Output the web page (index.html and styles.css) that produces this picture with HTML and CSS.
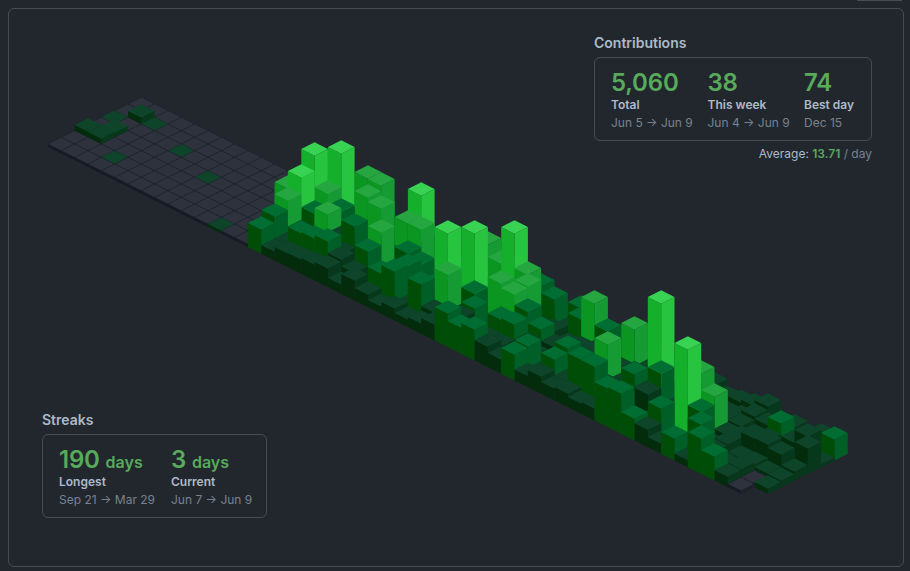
FILE: index.html
```html
<!DOCTYPE html>
<html>
  <head>
    <title>Isometric contributions</title>
    <link rel="stylesheet" href="styles.css">
  </head>
  <body>
    <div class="graph-box">
      <svg id="chart" class="chart" width="910" height="571"></svg>

      <div class="panel panel-top">
        <h5 class="panel-title">Contributions</h5>
        <div class="stat-card">
          <div class="stat">
            <span class="stat-num">5,060</span>
            <span class="stat-label">Total</span>
            <span class="stat-date">Jun 5 → Jun 9</span>
          </div>
          <div class="stat">
            <span class="stat-num">38</span>
            <span class="stat-label">This week</span>
            <span class="stat-date">Jun 4 → Jun 9</span>
          </div>
          <div class="stat">
            <span class="stat-num">74</span>
            <span class="stat-label">Best day</span>
            <span class="stat-date">Dec 15</span>
          </div>
        </div>
        <p class="average">Average: <b>13.71</b> <span>/ day</span></p>
      </div>

      <div class="panel panel-bottom">
        <h5 class="panel-title">Streaks</h5>
        <div class="stat-card">
          <div class="stat streak-long">
            <span class="stat-num">190 <small>days</small></span>
            <span class="stat-label">Longest</span>
            <span class="stat-date">Sep 21 → Mar 29</span>
          </div>
          <div class="stat">
            <span class="stat-num">3 <small>days</small></span>
            <span class="stat-label">Current</span>
            <span class="stat-date">Jun 7 → Jun 9</span>
          </div>
        </div>
      </div>
    </div>
    <div class="tab-edge"></div>
    <script src="chart.js"></script>
  </body>
</html>
```

FILE: styles.css
```css
body {
  margin: 0;
  background-color: #22272e;
  font-family: Inter, "Liberation Sans", sans-serif;
  color: #adbac7;
}

.graph-box {
  position: relative;
  box-sizing: border-box;
  width: 896px;
  height: 559px;
  margin: 8px 0 0 8px;
  border: 1px solid #444c56;
  border-radius: 6px;
}

.chart {
  position: absolute;
  left: -9px;
  top: -9px;
}

.panel {
  position: absolute;
}

.panel-top {
  left: 585px;
  top: 27px;
  width: 278px;
}

.panel-bottom {
  left: 33px;
  top: 404px;
  width: 225px;
}

.panel-title {
  margin: 0 0 7px;
  font-size: 14px;
  line-height: 14px;
  font-weight: 600;
}

.stat-card {
  display: flex;
  box-sizing: border-box;
  height: 84px;
  padding: 10px 16px 0;
  border: 1px solid #444c56;
  border-radius: 6px;
}

.stat {
  display: flex;
  flex-direction: column;
  width: 96.5px;
  flex-shrink: 0;
  white-space: nowrap;
}

.streak-long {
  width: 112px;
}

.stat-num {
  height: 29px;
  font-size: 24px;
  line-height: 29px;
  font-weight: 600;
  letter-spacing: -0.2px;
  color: #57ab5a;
}

.stat-num small {
  font-size: 16px;
  line-height: 16px;
  font-weight: 600;
  letter-spacing: 0;
}

.stat-label {
  font-size: 12px;
  line-height: 16px;
  font-weight: 600;
}

.stat-date {
  margin-top: 2px;
  font-size: 12px;
  line-height: 16px;
  color: #768390;
}

.average {
  margin: 6px 0 0;
  text-align: right;
  font-size: 12px;
  line-height: 14px;
}

.average b {
  font-weight: 600;
  color: #57ab5a;
}

.average span {
  color: #768390;
}

.tab-edge {
  position: absolute;
  left: 857px;
  top: 0;
  width: 45px;
  height: 1px;
  background-color: #444c56;
}
```

FILE: chart.js
```js
const svg = document.getElementById("chart");

const STEP_X = 13.33;
const STEP_Y = 6.67;
const WEEKS = 53;
const DAYS = 7;

// top, left face, right face
const COLORS = [
  ["#2d323c", "#171923", "#1f222b"],
  ["#0e4429", "#032c0c", "#07381c"],
  ["#006d32", "#004d08", "#005f27"],
  ["#26a641", "#0a9620", "#169a34"],
  ["#39d353", "#14b02c", "#27c43f"]
];

// the bars I could read: [w + d, d, y of the top face, level]
const BARS = [
  [2, 2, 125, 1], [3, 2, 132, 1], [4, 4, 118, 1], [4, 3, 126, 1], [4, 1, 159, 1],
  [6, 5, 111, 1], [7, 5, 125, 1], [9, 4, 152, 1], [11, 3, 179, 1], [12, 0, 226, 1],
  [15, 0, 223, 2],
  [16, 1, 210, 2], [16, 0, 245, 1],
  [17, 3, 182, 3], [17, 2, 194, 3], [17, 0, 247, 1],
  [18, 3, 171, 4], [18, 1, 227, 2], [18, 0, 253, 1],
  [19, 4, 149, 4], [19, 3, 207, 2], [19, 1, 232, 2], [19, 0, 258, 1],
  [20, 4, 187, 3], [20, 3, 208, 3], [20, 1, 235, 2], [20, 0, 262, 1],
  [21, 5, 147, 4], [21, 4, 205, 2], [21, 1, 253, 1],
  [22, 3, 220, 2], [22, 0, 274, 1],
  [23, 6, 172, 3], [23, 5, 191, 3], [23, 2, 245, 2], [23, 0, 288, 1],
  [24, 6, 179, 3], [24, 5, 202, 3], [24, 3, 226, 3], [24, 1, 267, 2], [24, 0, 300, 1],
  [25, 1, 265, 2], [25, 0, 302, 1],
  [26, 5, 217, 3], [26, 3, 247, 2], [26, 2, 260, 2], [26, 0, 313, 1],
  [27, 6, 189, 4], [27, 4, 223, 3], [27, 3, 258, 2], [27, 1, 278, 2], [27, 0, 317, 1],
  [28, 2, 280, 2], [28, 1, 306, 1], [28, 0, 318, 1],
  [29, 3, 227, 4], [29, 2, 268, 3], [29, 0, 307, 2],
  [30, 4, 263, 2], [30, 1, 312, 1], [30, 0, 321, 2],
  [31, 4, 227, 4], [31, 3, 287, 2], [31, 2, 302, 2], [31, 0, 323, 2],
  [32, 6, 238, 3], [32, 0, 340, 1],
  [33, 5, 257, 3], [33, 3, 277, 3], [33, 2, 313, 2], [33, 1, 340, 1], [33, 0, 353, 1],
  [34, 5, 227, 4], [34, 3, 288, 3], [34, 2, 318, 2], [34, 0, 348, 2],
  [35, 5, 268, 3], [35, 4, 280, 3], [35, 3, 305, 2], [35, 1, 340, 2],
  [36, 6, 280, 2], [36, 3, 323, 2], [36, 0, 370, 1],
  [37, 5, 293, 2], [37, 1, 353, 2], [37, 0, 382, 1],
  [38, 2, 342, 2], [38, 0, 387, 1],
  [39, 6, 302, 2], [39, 5, 313, 2], [39, 1, 353, 2], [39, 0, 397, 1],
  [40, 5, 297, 3], [40, 1, 360, 2], [40, 0, 402, 1],
  [41, 5, 325, 2], [41, 3, 338, 3], [41, 0, 382, 2],
  [42, 0, 387, 2],
  [43, 5, 323, 3], [43, 3, 368, 2], [43, 0, 412, 2],
  [44, 2, 388, 1], [44, 0, 423, 1],
  [45, 4, 297, 4], [45, 3, 367, 2], [45, 1, 402, 2], [45, 0, 437, 1],
  [46, 0, 432, 2],
  [47, 2, 343, 4],
  [48, 5, 367, 3], [48, 2, 405, 2], [48, 1, 418, 2], [48, 0, 432, 2],
  [49, 3, 390, 3], [49, 0, 450, 2],
  [50, 2, 438, 1], [50, 0, 470, 1],
  [51, 4, 420, 1], [51, 2, 452, 1], [51, 0, 484, 0],
  [52, 5, 410, 1], [52, 3, 432, 1], [52, 2, 458, 1], [52, 1, 477, 0],
  [53, 6, 400, 1], [53, 3, 438, 1], [53, 2, 467, 1], [53, 1, 482, 1],
  [54, 5, 417, 2], [54, 3, 448, 1], [54, 2, 474, 1],
  [55, 4, 455, 1], [55, 3, 465, 1],
  [56, 5, 430, 1], [56, 4, 442, 1],
  [57, 6, 430, 1], [57, 5, 458, 1],
  [58, 6, 433, 2]
];

function baseY(week, day) {
  return 147 + STEP_Y * (week - day);
}

function poly(points, fill) {
  const el = document.createElementNS("http://www.w3.org/2000/svg", "polygon");
  el.setAttribute("points", points.map((p) => p[0].toFixed(1) + "," + p[1].toFixed(1)).join(" "));
  el.setAttribute("fill", fill);
  svg.appendChild(el);
  return el;
}

function drawCube(week, day, height, level) {
  const cx = 48 + STEP_X * (week + day + 1);
  const cy = baseY(week, day) - height;
  const left = [cx - STEP_X, cy];
  const right = [cx + STEP_X, cy];
  const top = [cx, cy - STEP_Y];
  const bottom = [cx, cy + STEP_Y];
  const colors = COLORS[level];

  poly([left, bottom, [cx, cy + STEP_Y + height], [cx - STEP_X, cy + height]], colors[1]);
  poly([right, bottom, [cx, cy + STEP_Y + height], [cx + STEP_X, cy + height]], colors[2]);
  const face = poly([left, top, right, bottom], colors[0]);
  if (level === 0) {
    face.setAttribute("stroke", "#1a1d26");
    face.setAttribute("stroke-width", "0.6");
    face.setAttribute("stroke-dasharray", "2 1");
  }
}

const cells = {};
BARS.forEach(([sum, day, y, level]) => {
  const week = sum - day;
  cells[week + "-" + day] = { height: Math.max(3, baseY(week, day) - y), level };
});

for (let day = DAYS - 1; day >= 0; day--) {
  for (let week = 0; week < WEEKS; week++) {
    if (week === WEEKS - 1 && day === 0) continue;
    const cell = cells[week + "-" + day];
    if (cell) {
      drawCube(week, day, cell.height, cell.level);
    } else if (week >= 15) {
      // days I couldn't make out, low bars that vary a bit
      drawCube(week, day, 6 + (week * 3 + day * 5) % 10, 1);
    } else {
      drawCube(week, day, 3, 0);
    }
  }
}
```
